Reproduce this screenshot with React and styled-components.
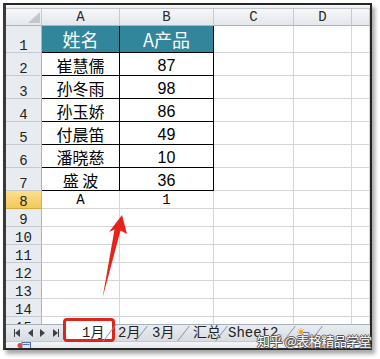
import React from 'react';
import styled, { createGlobalStyle } from 'styled-components';

const Global = createGlobalStyle`
  html, body { margin: 0; padding: 0; background: #fff; }
  body { width: 380px; height: 359px; overflow: hidden; }
`;

const COLS = '36px 78px 94px 80px 58px 1fr';
const MONO = '"Liberation Mono", "DejaVu Sans Mono", monospace';
const CJK = '"Noto Sans CJK SC", "Noto Sans", sans-serif';
const SANS = '"Liberation Sans", Arial, sans-serif';

const Page = styled.div`
  position: relative;
  width: 380px;
  height: 359px;
  padding: 3px 0 0 3px;
  box-sizing: border-box;
  background: #fff;
`;

const Window = styled.div`
  width: 369px;
  height: 347px;
  box-sizing: border-box;
  border: 2px solid #262626;
  border-left: 3px solid #3a3a3a;
  box-shadow: 3px 4px 4px rgba(0, 0, 0, 0.35);
  background: #fff;
  display: flex;
  flex-direction: column;
  overflow: hidden;
`;

const TopStrip = styled.div`
  flex: none;
  height: 4px;
  background: linear-gradient(#fafafa, #e9ebee);
  border-bottom: 1px solid #c5c9cf;
  box-sizing: border-box;
`;

const Sheet = styled.div`
  flex: none;
  height: 315px;
  display: flex;
  flex-direction: column;
  overflow: hidden;
`;

const Row = styled.div`
  flex: none;
  display: grid;
  grid-template-columns: ${COLS};
  grid-template-rows: ${(p) => p.$h}px;
  height: ${(p) => p.$h}px;
  line-height: 1;
`;

const ColHead = styled.div`
  position: relative;
  box-sizing: border-box;
  background: linear-gradient(#f6f7f9, #e4e7eb);
  border-right: 1px solid #c6cad0;
  border-bottom: 1px solid #aeb3ba;
  display: flex;
  align-items: center;
  justify-content: center;
  font: 14px ${MONO};
  color: #2a2a2a;
`;

const Corner = styled.svg`
  position: absolute;
  right: 1px;
  bottom: 2px;
`;

const RowHead = styled.div`
  box-sizing: border-box;
  background: ${(p) => (p.$sel ? 'linear-gradient(#fbe08c, #f3c95a)' : '#e8ebef')};
  border-right: 1px solid #aeb3ba;
  border-bottom: 1px solid ${(p) => (p.$sel ? '#d9a93a' : '#c6cad0')};
  display: flex;
  align-items: flex-end;
  justify-content: center;
  font: 14px ${MONO};
  line-height: 12px;
  color: #222;
`;

const Cell = styled.div`
  box-sizing: border-box;
  border-right: 1px solid ${(p) => (p.$boxed ? '#000' : '#d6d6d6')};
  border-bottom: 1px solid ${(p) => (p.$boxed ? '#000' : '#d6d6d6')};
  background: ${(p) => (p.$head ? '#31869b' : '#fff')};
  color: ${(p) => (p.$head ? '#fff' : '#000')};
  display: flex;
  align-items: center;
  justify-content: center;
  white-space: pre;
  line-height: 1;
  font-family: ${(p) => (p.$kind === 'num' ? SANS : p.$kind === 'mono' ? MONO : CJK)};
  font-size: ${(p) => (p.$head ? 18 : p.$kind === 'mono' ? 14 : 16)}px;
  padding-top: ${(p) => (p.$head ? 0 : p.$kind === 'num' ? 3 : 1)}px;
`;

const TabBar = styled.div`
  flex: none;
  height: 17px;
  display: flex;
  align-items: stretch;
  background: linear-gradient(#e9ecf0, #d8dce2);
  border-top: 1px solid #a7afba;
  box-sizing: border-box;
`;

const Nav = styled.div`
  flex: none;
  width: 57px;
  display: flex;
  align-items: center;
  gap: 7px;
  padding-left: 8px;
  box-sizing: border-box;
`;

const Tab = styled.div`
  position: relative;
  flex: none;
  width: ${(p) => p.$w}px;
  box-sizing: border-box;
  padding-left: ${(p) => p.$pad}px;
  margin-top: ${(p) => (p.$active ? -1 : 0)}px;
  background: ${(p) => (p.$active ? '#fff' : 'transparent')};
  display: flex;
  align-items: center;
  font: 14px ${MONO}, ${CJK};
  line-height: 1;
  color: #222;
  &::after {
    content: '';
    position: absolute;
    right: 3px;
    top: 1px;
    bottom: 0;
    width: 1px;
    background: #8b929c;
    transform: skewX(-38deg);
  }
`;

const Highlight = styled.div`
  position: absolute;
  left: 0px;
  top: -6px;
  width: 52px;
  height: 24px;
  box-sizing: border-box;
  border: 3px solid #e0231e;
  border-radius: 4px;
`;

const StatusBar = styled.div`
  flex: 1;
  background: linear-gradient(#f3f4f6, #e6e8ec);
  border-top: 1px solid #c3c8cf;
  display: flex;
  align-items: center;
  padding-left: 11px;
`;

const Overlay = styled.svg`
  position: absolute;
  left: 0;
  top: 0;
  pointer-events: none;
`;

const Watermark = styled.div`
  position: absolute;
  left: 257px;
  top: 334px;
  font: 13px ${CJK};
  line-height: 1;
  letter-spacing: -0.5px;
  color: #fff;
  white-space: pre;
  text-shadow: -1px 0 #555, 1px 0 #555, 0 -1px #555, 0 1px #555, 1px 1px #777;
`;

const people = [
  ['崔慧儒', '87'],
  ['孙冬雨', '98'],
  ['孙玉娇', '86'],
  ['付晨笛', '49'],
  ['潘晓慈', '10'],
  ['盛 波', '36'],
];

const Tri = ({ dir, bar }) => (
  <svg width="6" height="8" viewBox="0 0 6 8">
    {dir === 'l' ? (
      <>
        <polygon points="6,0 6,8 1,4" fill="#3d4148" />
        {bar && <rect x="0" y="0" width="1" height="8" fill="#3d4148" />}
      </>
    ) : (
      <>
        <polygon points="0,0 0,8 5,4" fill="#3d4148" />
        {bar && <rect x="5" y="0" width="1" height="8" fill="#3d4148" />}
      </>
    )}
  </svg>
);

export default function App() {
  const blanks = [8, 9, 10, 11, 12, 13, 14, 15];
  return (
    <Page>
      <Global />
      <Window>
        <TopStrip />
        <Sheet>
          <Row $h={17}>
            <ColHead>
              <Corner width="12" height="11" viewBox="0 0 12 11">
                <polygon points="12,0 12,11 0,11" fill="#c3c6cb" />
              </Corner>
            </ColHead>
            <ColHead>A</ColHead>
            <ColHead>B</ColHead>
            <ColHead>C</ColHead>
            <ColHead>D</ColHead>
            <ColHead />
          </Row>
          <Row $h={27}>
            <RowHead>1</RowHead>
            <Cell $boxed $head>姓名</Cell>
            <Cell $boxed $head>A产品</Cell>
            <Cell />
            <Cell />
            <Cell />
          </Row>
          {people.map(([name, val], i) => (
            <Row $h={23} key={name}>
              <RowHead>{i + 2}</RowHead>
              <Cell $boxed>{name}</Cell>
              <Cell $boxed $kind="num">{val}</Cell>
              <Cell />
              <Cell />
              <Cell />
            </Row>
          ))}
          {blanks.map((n) => (
            <Row $h={18} key={n}>
              <RowHead $sel={n === 8}>{n}</RowHead>
              <Cell $kind="mono">{n === 8 ? 'A' : ''}</Cell>
              <Cell $kind="mono">{n === 8 ? '1' : ''}</Cell>
              <Cell />
              <Cell />
              <Cell />
            </Row>
          ))}
        </Sheet>
        <TabBar>
          <Nav>
            <Tri dir="l" bar />
            <Tri dir="l" />
            <Tri dir="r" />
            <Tri dir="r" bar />
          </Nav>
          <Tab $active $w={50} $pad={19}>
            1月
            <Highlight />
          </Tab>
          <Tab $w={32} $pad={5}>2月</Tab>
          <Tab $w={42} $pad={7}>3月</Tab>
          <Tab $w={38} $pad={6}>汇总</Tab>
          <Tab $w={68} $pad={3}>Sheet2</Tab>
          <Tab $w={27} $pad={4}>
            <svg width="13" height="11" viewBox="0 0 13 11">
              <circle cx="4" cy="4" r="2.2" fill="#f3a21c" />
              <g stroke="#f3a21c" strokeWidth="1">
                <line x1="4" y1="0" x2="4" y2="1" />
                <line x1="0" y1="4" x2="1" y2="4" />
                <line x1="7" y1="4" x2="8" y2="4" />
                <line x1="1.2" y1="1.2" x2="1.9" y2="1.9" />
                <line x1="6.8" y1="1.2" x2="6.1" y2="1.9" />
              </g>
              <path d="M6 4.5 H12 V10.5 H3 V7" fill="none" stroke="#5a79b8" strokeWidth="1" />
            </svg>
          </Tab>
        </TabBar>
        <StatusBar>
          <svg width="14" height="7" viewBox="0 0 14 7">
            <circle cx="3" cy="3.5" r="2.5" fill="#e0453a" />
            <rect x="5" y="0.5" width="8.5" height="6" fill="#dfe8f7" stroke="#5573b5" strokeWidth="1" />
            <line x1="6" y1="2.5" x2="12.5" y2="2.5" stroke="#5573b5" strokeWidth="1" />
          </svg>
        </StatusBar>
      </Window>
      <Overlay width="380" height="359" viewBox="0 0 380 359">
        <polygon
          points="122,215 127,234 120.5,230.5 102.5,298 114.5,229.5 109,232"
          fill="#e8221b"
        />
      </Overlay>
      <Watermark>知乎 @表格精品学堂</Watermark>
    </Page>
  );
}
